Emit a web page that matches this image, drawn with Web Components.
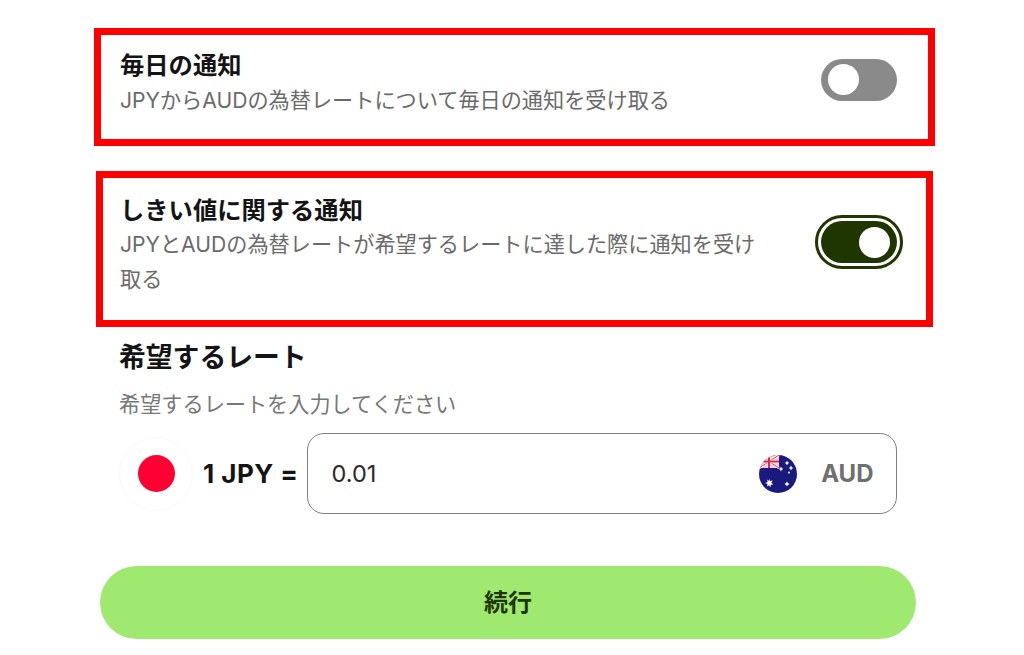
<!DOCTYPE html>
<html lang="ja"><head><meta charset="utf-8">
<style>
html,body{margin:0;padding:0;background:#fff}
body{width:1024px;height:655px;overflow:hidden;font-family:Inter,"Noto Sans CJK JP",sans-serif;color:#141414}
</style></head><body>
<notify-screen>
  <notify-row style="--ml:94px;--w:841px;--h:118.5px;--mt:27.5px;--pt:15.5px;--pl:19px;--pr:25px;--tog:2.5px;--gap:2.5px">
    <span slot="title">毎日の通知</span>
    <span slot="desc">JPYからAUDの為替レートについて毎日の通知を受け取る</span>
    <toggle-switch slot="control"></toggle-switch>
  </notify-row>
  <notify-row style="--ml:96px;--w:837px;--h:156px;--mt:25px;--pt:17px;--pl:17px;--pr:23px;--tog:20px;--gap:2px">
    <span slot="title">しきい値に関する通知</span>
    <span slot="desc">JPYとAUDの為替レートが希望するレートに達した際に通知を受け取る</span>
    <toggle-switch slot="control" on></toggle-switch>
  </notify-row>
  <rate-form></rate-form>
  <cta-button>続行</cta-button>
</notify-screen>
<script>
function def(name, html){
  customElements.define(name, class extends HTMLElement{
    constructor(){super();this.attachShadow({mode:'open'}).innerHTML=html;}
  });
}
def('notify-screen',`<style>:host{display:block}</style><slot></slot>`);
def('notify-row',`<style>
:host{display:flex;box-sizing:border-box;margin:var(--mt) 0 0 var(--ml);width:var(--w);height:var(--h);border:7px solid #ff0000;padding:var(--pt) var(--pr) 0 var(--pl);justify-content:space-between;align-items:flex-start}
.text{width:640px}
.t{font-size:24.3px;line-height:30px;font-weight:700;color:#141414}
.d{font-size:21.17px;line-height:34.5px;color:#6a6a6a;margin-top:var(--gap)}
.c{margin-top:var(--tog)}
</style><div class="text"><div class="t"><slot name="title"></slot></div><div class="d"><slot name="desc"></slot></div></div><div class="c"><slot name="control"></slot></div>`);
def('toggle-switch',`<style>
:host{display:block;box-sizing:border-box;width:88px;height:54px;padding:6px;border-radius:27px}
:host([on]){border:3px solid #1f3600;padding:3px}
.track{height:42px;background:#8a8a8a;border-radius:21px;display:flex;align-items:center;padding:0 7px}
:host([on]) .track{background:#1f3600;justify-content:flex-end}
.knob{width:31px;height:31px;border-radius:50%;background:#fff}
</style><div class="track"><div class="knob"></div></div>`);
def('flag-jp',`<style>
:host{display:flex;width:74px;height:74px;box-sizing:border-box;border:1px solid #f9f9f9;border-radius:50%;align-items:center;justify-content:center;flex:none}
i{display:block;width:37px;height:37px;border-radius:50%;background:#ff0033}
</style><i></i>`);
def('flag-au',`<style>:host{display:block;width:38px;height:38px;flex:none}svg{display:block}</style>
<svg width="38" height="38" viewBox="0 0 38 38"><defs><clipPath id="c"><circle cx="19" cy="19" r="19"/></clipPath></defs>
<g clip-path="url(#c)"><rect width="38" height="38" fill="#1a1a7e"/>
<rect x="0" y="0" width="20" height="13" fill="#f6c6d0"/>
<path d="M0 0L20 13M20 0L0 13" stroke="#fff" stroke-width="2.6"/>
<path d="M0 0L20 13M20 0L0 13" stroke="#e8304a" stroke-width="1"/>
<path d="M10 0V13M0 6.5H20" stroke="#fff" stroke-width="3.6"/>
<path d="M10 0V13M0 6.5H20" stroke="#e8204a" stroke-width="2"/>
<g fill="#fff"><path d="M10 23.5l1 2.6 2.7-.6-1.4 2.3 2.1 1.7-2.7.3-.2 2.7-1.5-2.3-2 1.4.6-2.7-2.5-1 2.6-.9-.6-2.4 2.1 1.4z"/>
<path d="M28 5.6l.8 1.6 1.6.8-1.6.8-.8 1.6-.8-1.6-1.6-.8 1.6-.8z"/>
<path d="M22 11.6l.8 1.6 1.6.8-1.6.8-.8 1.6-.8-1.6-1.6-.8 1.6-.8z"/>
<path d="M32 10.6l.8 1.6 1.6.8-1.6.8-.8 1.6-.8-1.6-1.6-.8 1.6-.8z"/>
<circle cx="30" cy="17.5" r="1"/>
<path d="M28 26.4l.9 1.7 1.7.9-1.7.9-.9 1.7-.9-1.7-1.7-.9 1.7-.9z"/></g></g></svg>`);
def('rate-form',`<style>
:host{display:block;margin-left:119px;width:778px}
h2{margin:15px 0 0;font-size:26.8px;line-height:30px;font-weight:700;color:#141414;padding-bottom:1px}
p{margin:17px 0 0;font-size:21.17px;line-height:28px;color:#777}
.row{display:flex;align-items:center;margin-top:15px}
.eq{font-size:26px;font-weight:700;margin-left:10px;width:104px;white-space:nowrap;color:#141414;letter-spacing:.45px}
.input{flex:1;box-sizing:border-box;height:81px;border:1.5px solid #808080;border-radius:17px;display:flex;align-items:center;padding:0 22.5px 0 23.5px}
.v{flex:1;font-size:23.5px;color:#2a2a2a}
.cur{font-size:24px;font-weight:700;color:#6f6f6f;margin-left:24px}
</style>
<h2>希望するレート</h2><p>希望するレートを入力してください</p>
<div class="row"><flag-jp></flag-jp><span class="eq">1 JPY =</span>
<div class="input"><span class="v">0.01</span><flag-au></flag-au><span class="cur">AUD</span></div></div>`);
def('cta-button',`<style>
:host{display:flex;align-items:center;justify-content:center;box-sizing:border-box;margin:52px 0 0 100px;width:816px;height:73px;border-radius:37px;background:#a0e970;color:#1f3600;font-size:24px;font-weight:700;padding-bottom:5px}
</style><slot></slot>`);
</script>
</body></html>
